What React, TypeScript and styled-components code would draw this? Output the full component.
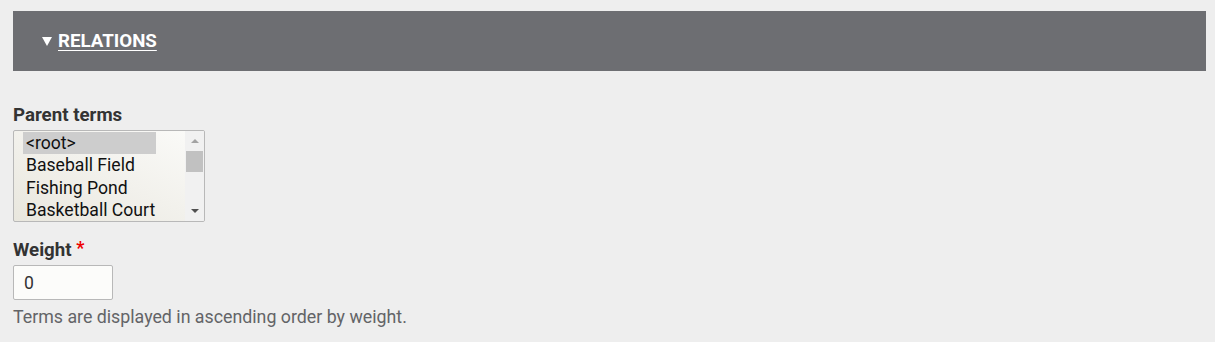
import styled, { createGlobalStyle } from 'styled-components'

const GlobalStyle = createGlobalStyle`
	html, body {
		margin: 0;
		padding: 0;
		background-color: #eeeeee;
	}

	body {
		font-family: Roboto, 'Liberation Sans', sans-serif;
		color: #333;
	}
`

const parentTerms = ['<root>', 'Baseball Field', 'Fishing Pond', 'Basketball Court']

export default function App() {
	return (
		<>
			<GlobalStyle />
			<Page>
				<Details>
					<Summary>
						<Caret />
						<SummaryTitle>Relations</SummaryTitle>
					</Summary>
				</Details>

				<FormItem $gap={4}>
					<Label>Parent terms</Label>
					<SelectBox>
						<OptionList>
							{parentTerms.map((term, i) => (
								<Option key={term} $selected={i === 0}>
									{term}
								</Option>
							))}
						</OptionList>
						<Scrollbar>
							<ScrollArrow $up $disabled />
							<ScrollTrack>
								<ScrollThumb />
							</ScrollTrack>
							<ScrollArrow />
						</Scrollbar>
					</SelectBox>
				</FormItem>

				<FormItem $gap={4} $top={17}>
					<Label>
						Weight <Required>*</Required>
					</Label>
					<TextInput type='text' defaultValue='0' />
				</FormItem>
				<Description>Terms are displayed in ascending order by weight.</Description>
			</Page>
		</>
	)
}

const Page = styled.div`
	padding: 11px 9px 0 13px;
	display: flex;
	flex-direction: column;
`

const Details = styled.div`
	background-color: #6d6e72;
	height: 60px;
	display: flex;
	align-items: center;
	margin-bottom: 33px;
`

const Summary = styled.div`
	display: flex;
	align-items: center;
	gap: 6px;
	padding-left: 29px;
	color: #fff;
	font-weight: 700;
	font-size: 18.7px;
	line-height: 22px;
`

const Caret = styled.span`
	width: 0;
	height: 0;
	border-left: 5px solid transparent;
	border-right: 5px solid transparent;
	border-top: 9px solid #fff;
`

const SummaryTitle = styled.span`
	text-transform: uppercase;
	text-decoration: underline;
	text-underline-offset: 3px;
	text-decoration-thickness: 1px;
`

const FormItem = styled.div<{ $gap: number; $top?: number }>`
	display: flex;
	flex-direction: column;
	align-items: flex-start;
	gap: ${p => p.$gap}px;
	margin-top: ${p => p.$top ?? 0}px;
`

const Label = styled.label`
	font-size: 18.7px;
	font-weight: 700;
	line-height: 22px;
	color: #333;
`

const Required = styled.span`
	color: #e00;
	font-size: 18px;
	vertical-align: top;
	line-height: 18px;
`

const SelectBox = styled.div`
	width: 190px;
	height: 90px;
	border: 1px solid #b8b8b8;
	border-radius: 2px;
	background: linear-gradient(to top right, #e9e7de 0%, #f2f1ec 50%, #fbfbf9 100%);
	display: flex;
	justify-content: space-between;
	overflow: hidden;
`

const OptionList = styled.div`
	padding: 1px 0 0 9px;
	display: flex;
	flex-direction: column;
	width: 133px;
`

const Option = styled.div<{ $selected?: boolean }>`
	font-size: 17.6px;
	line-height: 22.4px;
	padding: 0 3px;
	color: #111;
	white-space: nowrap;
	background-color: ${p => (p.$selected ? '#cdcdcd' : 'transparent')};
`

const Scrollbar = styled.div`
	width: 19px;
	background-color: #f1f1f1;
	display: flex;
	flex-direction: column;
`

const ScrollArrow = styled.div<{ $up?: boolean; $disabled?: boolean }>`
	height: 20px;
	display: flex;
	align-items: center;
	justify-content: center;

	&::before {
		content: '';
		width: 0;
		height: 0;
		border-left: 4px solid transparent;
		border-right: 4px solid transparent;
		${p =>
			p.$up
				? `border-bottom: 4px solid ${p.$disabled ? '#a3a3a3' : '#505050'};`
				: `border-top: 4px solid ${p.$disabled ? '#a3a3a3' : '#505050'};`}
	}
`

const ScrollTrack = styled.div`
	flex: 1;
	padding: 0 1px;
`

const ScrollThumb = styled.div`
	height: 21px;
	background-color: #c1c1c1;
`

const TextInput = styled.input`
	box-sizing: border-box;
	width: 100px;
	height: 35px;
	border: 1px solid #b8b8b8;
	border-radius: 2px;
	background-color: #fcfcfa;
	padding: 0 10px;
	font-family: Roboto, 'Liberation Sans', sans-serif;
	font-size: 17.6px;
	color: #333;
	outline: none;
`

const Description = styled.div`
	font-size: 17.8px;
	line-height: 22px;
	color: #636467;
	margin-top: 6px;
`
